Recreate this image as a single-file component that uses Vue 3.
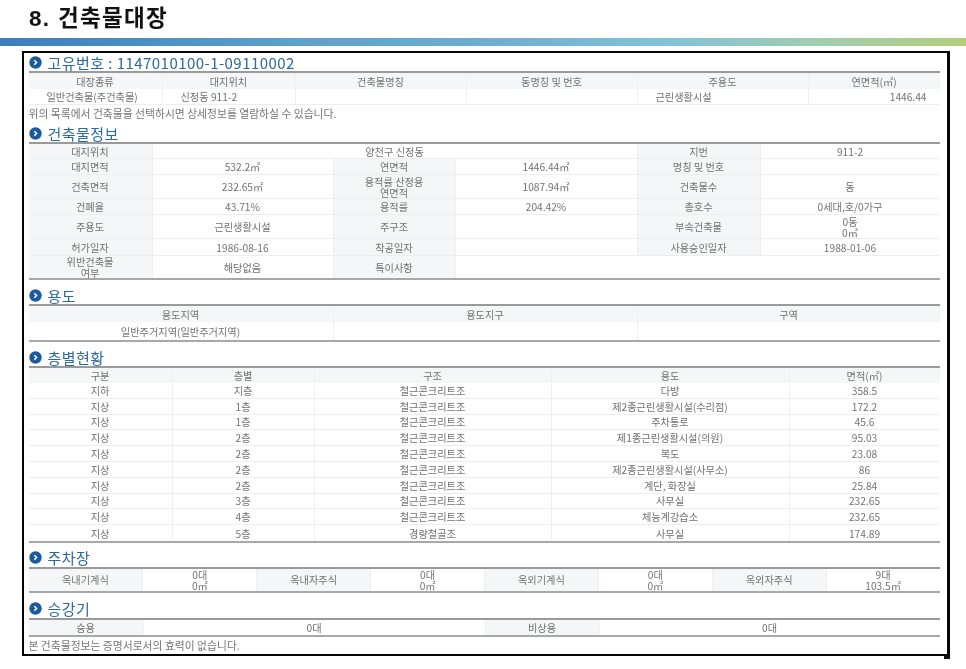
<script setup>
const c = (t, o = {}) => ({ t, ...o });
const th = (t, o = {}) => ({ t, th: true, ...o });

const sections = [
  {
    title: '고유번호 : 1147010100-1-09110002',
    cols: '133px 133px 171px 171px 171px 132px',
    end: false,
    gap: 0,
    rows: [
      { h: 16, cells: [th('대장종류'), th('대지위치'), th('건축물명칭'), th('동명칭 및 번호'), th('주용도'), th('연면적(㎡)')] },
      { h: 16, line: true, cells: [c('일반건축물(주건축물)', { left: true }), c('신정동 911-2', { left: true }), c(''), c(''), c('근린생활시설', { left: true }), c('1446.44', { right: true })] },
    ],
    note: '위의 목록에서 건축물을 선택하시면 상세정보를 열람하실 수 있습니다.',
    noteTall: true,
  },
  {
    title: '건축물정보',
    cols: '123px 181px 122px 182px 123px 180px',
    end: true,
    gap: 2,
    rows: [
      { h: 15, line: true, cells: [th('대지위치'), c('양천구 신정동', { span: 3 }), th('지번'), c('911-2')] },
      { h: 16, line: true, cells: [th('대지면적'), c('532.2㎡'), th('연면적'), c('1446.44㎡'), th('명칭 및 번호'), c('')] },
      { h: 24, line: true, cells: [th('건축면적'), c('232.65㎡'), th('용적률 산정용\n연면적'), c('1087.94㎡'), th('건축물수'), c('동')] },
      { h: 16, line: true, cells: [th('건폐율'), c('43.71%'), th('용적률'), c('204.42%'), th('총호수'), c('0세대,호/0가구')] },
      { h: 24, line: true, cells: [th('주용도'), c('근린생활시설'), th('주구조'), c(''), th('부속건축물'), c('0동\n0㎡')] },
      { h: 17, line: true, cells: [th('허가일자'), c('1986-08-16'), th('착공일자'), c(''), th('사용승인일자'), c('1988-01-06')] },
      { h: 22, cells: [th('위반건축물\n여부'), c('해당없음'), th('특이사항'), c('', { span: 3 })] },
    ],
  },
  {
    title: '용도',
    cols: '304px 304px 303px',
    end: true,
    gap: 6,
    rows: [
      { h: 16, cells: [th('용도지역'), th('용도지구'), th('구역')] },
      { h: 18, cells: [c('일반주거지역(일반주거지역)'), c(''), c('')] },
    ],
  },
  {
    title: '층별현황',
    cols: '143px 142px 237px 238px 151px',
    end: true,
    gap: 6,
    rows: [
      { h: 15, cells: [th('구분'), th('층별'), th('구조'), th('용도'), th('면적(㎡)')] },
      ...[
        ['지하', '지층', '철근콘크리트조', '다방', '358.5'],
        ['지상', '1층', '철근콘크리트조', '제2종근린생활시설(수리점)', '172.2'],
        ['지상', '1층', '철근콘크리트조', '주차통로', '45.6'],
        ['지상', '2층', '철근콘크리트조', '제1종근린생활시설(의원)', '95.03'],
        ['지상', '2층', '철근콘크리트조', '복도', '23.08'],
        ['지상', '2층', '철근콘크리트조', '제2종근린생활시설(사무소)', '86'],
        ['지상', '2층', '철근콘크리트조', '계단, 화장실', '25.84'],
        ['지상', '3층', '철근콘크리트조', '사무실', '232.65'],
        ['지상', '4층', '철근콘크리트조', '체능계강습소', '232.65'],
        ['지상', '5층', '경량철골조', '사무실', '174.89'],
      ].map((r, i) => ({ h: 15.8, line: i < 9, cells: r.map((t) => c(t)) })),
    ],
  },
  {
    title: '주차장',
    cols: 'repeat(8, 1fr)',
    end: true,
    gap: 6,
    rows: [
      { h: 22, cells: [th('옥내기계식'), c('0대\n0㎡'), th('옥내자주식'), c('0대\n0㎡'), th('옥외기계식'), c('0대\n0㎡'), th('옥외자주식'), c('9대\n103.5㎡')] },
    ],
  },
  {
    title: '승강기',
    cols: '114px 342px 114px 341px',
    end: true,
    gap: 7,
    rows: [
      { h: 15, cells: [th('승용'), c('0대'), th('비상용'), c('0대')] },
    ],
    note: '본 건축물정보는 증명서로서의 효력이 없습니다.',
  },
];

const headerAll = (row) => row.cells.every((x) => x.th);
</script>

<template>
  <div class="page">
    <h1 class="title">8. 건축물대장</h1>
    <div class="bar"></div>
    <div class="frame">
      <span class="nub"></span>
      <section
        v-for="s in sections"
        :key="s.title"
        class="section"
        :style="{ marginTop: s.gap + 'px' }"
      >
        <h2 class="heading">
          <svg class="dot" width="13" height="13" viewBox="0 0 13 13" aria-hidden="true">
            <circle cx="6.5" cy="6.5" r="6.2" fill="#1d5c9c" />
            <path d="M5.3 4.2 7.6 6.5 5.3 8.8" fill="none" stroke="#fff" stroke-width="1.5" />
          </svg>
          <span>{{ s.title }}</span>
        </h2>
        <div class="table" :class="{ end: s.end }">
          <div
            v-for="(row, ri) in s.rows"
            :key="ri"
            class="row"
            :class="{ line: row.line, head: headerAll(row) }"
            :style="{ gridTemplateColumns: s.cols, height: row.h + 'px' }"
          >
            <div
              v-for="(cell, ci) in row.cells"
              :key="ci"
              class="cell"
              :class="{ th: cell.th, left: cell.left, right: cell.right }"
              :style="cell.span ? { gridColumn: 'span ' + cell.span } : null"
            >{{ cell.t }}</div>
          </div>
        </div>
        <p v-if="s.note" class="note" :class="{ tall: s.noteTall }">{{ s.note }}</p>
      </section>
    </div>
  </div>
</template>

<style>
html, body { background: #fff; }
</style>

<style scoped>
.page {
  width: 966px;
  height: 669px;
  overflow: hidden;
  background: #fff;
  font-family: "Noto Sans CJK KR", "Liberation Sans", sans-serif;
}
.title {
  margin: 0;
  height: 38px;
  padding-left: 29px;
  box-sizing: border-box;
  font-family: "Liberation Sans", "Noto Sans CJK KR", sans-serif;
  font-size: 22.5px;
  line-height: 37px;
  font-weight: 700;
  letter-spacing: 1.3px;
  color: #111;
  filter: blur(0.3px);
}
.bar {
  height: 8px;
  background: linear-gradient(90deg, #3d7dbc 0%, #5f9fcb 30%, #6fb0d0 52%, #86c3d6 70%, #a3ccb0 85%, #b3cc7c 100%);
  filter: blur(0.5px);
}
.frame {
  position: relative;
  box-sizing: border-box;
  width: 928px;
  height: 605px;
  margin: 5px 0 0 22px;
  padding: 0 7px 0 4.5px;
  border: 2.5px solid #050505;
  border-right-width: 3px;
  color: #727272;
  font-size: 10.2px;
}
.nub {
  position: absolute;
  right: -3px;
  bottom: -5px;
  width: 6px;
  height: 3px;
  background: #111;
}
.section {
  filter: blur(0.5px);
}
.heading {
  display: flex;
  align-items: center;
  gap: 6px;
  height: 18px;
  margin: 0;
  font-size: 15px;
  font-weight: 400;
  color: #2b6a9e;
  letter-spacing: 0.45px;
}
.dot { flex: none; }
.table {
  border-top: 2px solid #9a9a9a;
  width: 911px;
}
.table.end { border-bottom: 2px solid #a8a8a8; }
.row {
  display: grid;
  box-sizing: border-box;
}
.row.line { border-bottom: 1px solid #eceff1; }
.row.head { background: #f4f6f8; }
.cell {
  display: flex;
  align-items: center;
  justify-content: center;
  text-align: center;
  white-space: pre-line;
  line-height: 11px;
  min-width: 0;
  border-left: 1px solid #eef0f2;
}
.cell:first-child { border-left: 0; }
.cell.th { background: #f4f6f8; }
.cell.left { justify-content: flex-start; padding-left: 18px; }
.cell.right { justify-content: flex-end; padding-right: 13px; }
.note {
  margin: 0;
  height: 16px;
  line-height: 16px;
  font-size: 10.8px;
  color: #767676;
}
.note.tall { height: 17px; line-height: 17px; }
</style>
